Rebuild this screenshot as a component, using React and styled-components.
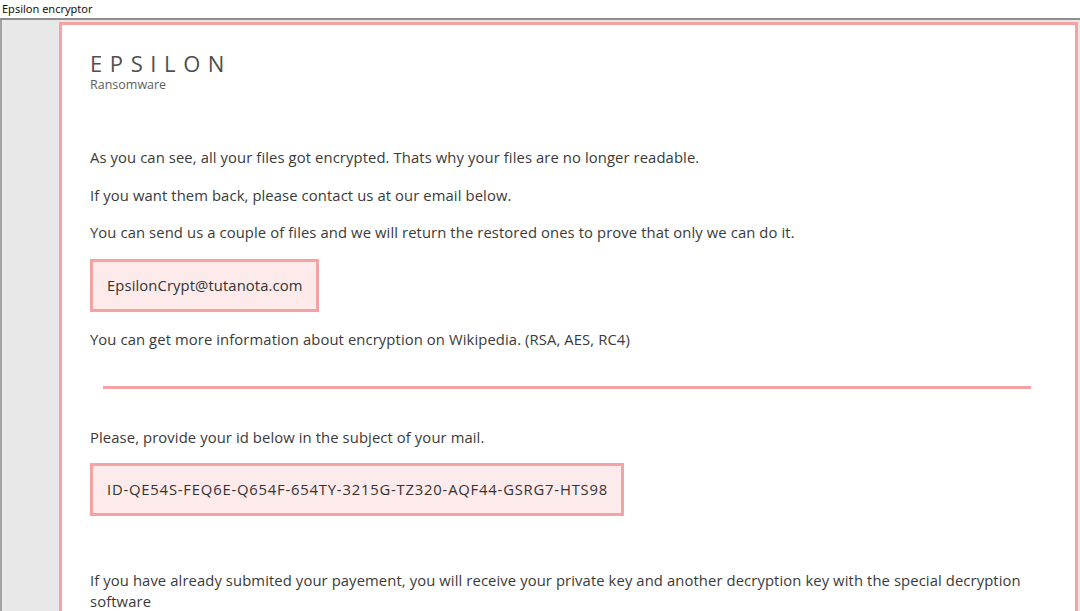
import React from "react";
import styled, { createGlobalStyle } from "styled-components";

const GlobalStyle = createGlobalStyle`
  html, body {
    margin: 0;
    padding: 0;
    width: 1080px;
    height: 611px;
    overflow: hidden;
    background: #ffffff;
  }
`;

const Window = styled.div`
  width: 1080px;
  height: 611px;
  display: flex;
  flex-direction: column;
  overflow: hidden;
`;

const TitleBar = styled.div`
  height: 18px;
  padding-left: 2px;
  font-family: "Noto Sans", "Liberation Sans", sans-serif;
  font-size: 11px;
  line-height: 18px;
  color: #111;
  background: #fff;
  border-bottom: 2px solid #8e8e8e;
`;

const Body = styled.div`
  flex: 1;
  display: flex;
  background: #e8e8e8;
  border-left: 2px solid #a3a3a3;
  padding-top: 2px;
  padding-right: 2px;
  min-height: 0;
`;

const Sidebar = styled.div`
  width: 57px;
  flex-shrink: 0;
`;

const Panel = styled.div`
  flex: 1;
  background: #fff;
  border: 3px solid #f6a2a2;
  border-bottom: none;
  padding: 0 30px 0 28px;
  font-family: "Open Sans", "DejaVu Sans", sans-serif;
  color: #3a3a3a;
`;

const Brand = styled.div`
  margin-top: 27px;
  margin-bottom: 54px;
`;

const Logo = styled.div`
  font-size: 22px;
  line-height: 22px;
  letter-spacing: 7.6px;
  color: #4f4f4f;
`;

const Tagline = styled.div`
  margin-top: 3px;
  font-size: 12.5px;
  line-height: 16px;
  color: #5e5e5e;
`;

const Text = styled.p`
  margin: 0 0 ${(p) => p.$gap ?? 16.5}px;
  font-size: 14.8px;
  line-height: 21px;
  letter-spacing: 0.1px;
`;

const CodeBox = styled.div`
  width: max-content;
  box-sizing: border-box;
  height: 53px;
  line-height: 47px;
  padding: 0 13px 0 14px;
  border: 3px solid #f6a2a2;
  background: #fdeaeb;
  font-size: 14.8px;
  letter-spacing: ${(p) => (p.$wide ? "0.8px" : "0.1px")};
  color: #333;
  margin-bottom: ${(p) => p.$gap}px;
`;

const Divider = styled.hr`
  height: 3px;
  border: none;
  background: #f6a2a2;
  margin: 0 14px 38px 13px;
`;

export default function App() {
  return (
    <Window>
      <GlobalStyle />
      <TitleBar>Epsilon encryptor</TitleBar>
      <Body>
        <Sidebar />
        <Panel>
          <Brand>
            <Logo>EPSILON</Logo>
            <Tagline>Ransomware</Tagline>
          </Brand>
          <Text>
            As you can see, all your files got encrypted. Thats why your files are no longer readable.
          </Text>
          <Text>If you want them back, please contact us at our email below.</Text>
          <Text $gap={15.5}>
            You can send us a couple of files and we will return the restored ones to prove that only we can do it.
          </Text>
          <CodeBox $gap={17}>EpsilonCrypt@tutanota.com</CodeBox>
          <Text $gap={36}>
            You can get more information about encryption on Wikipedia. (RSA, AES, RC4)
          </Text>
          <Divider />
          <Text $gap={15}>Please, provide your id below in the subject of your mail.</Text>
          <CodeBox $wide $gap={54.5}>
            ID-QE54S-FEQ6E-Q654F-654TY-3215G-TZ320-AQF44-GSRG7-HTS98
          </CodeBox>
          <Text>
            If you have already submited your payement, you will receive your private key and another decryption key with the special decryption software
          </Text>
        </Panel>
      </Body>
    </Window>
  );
}
